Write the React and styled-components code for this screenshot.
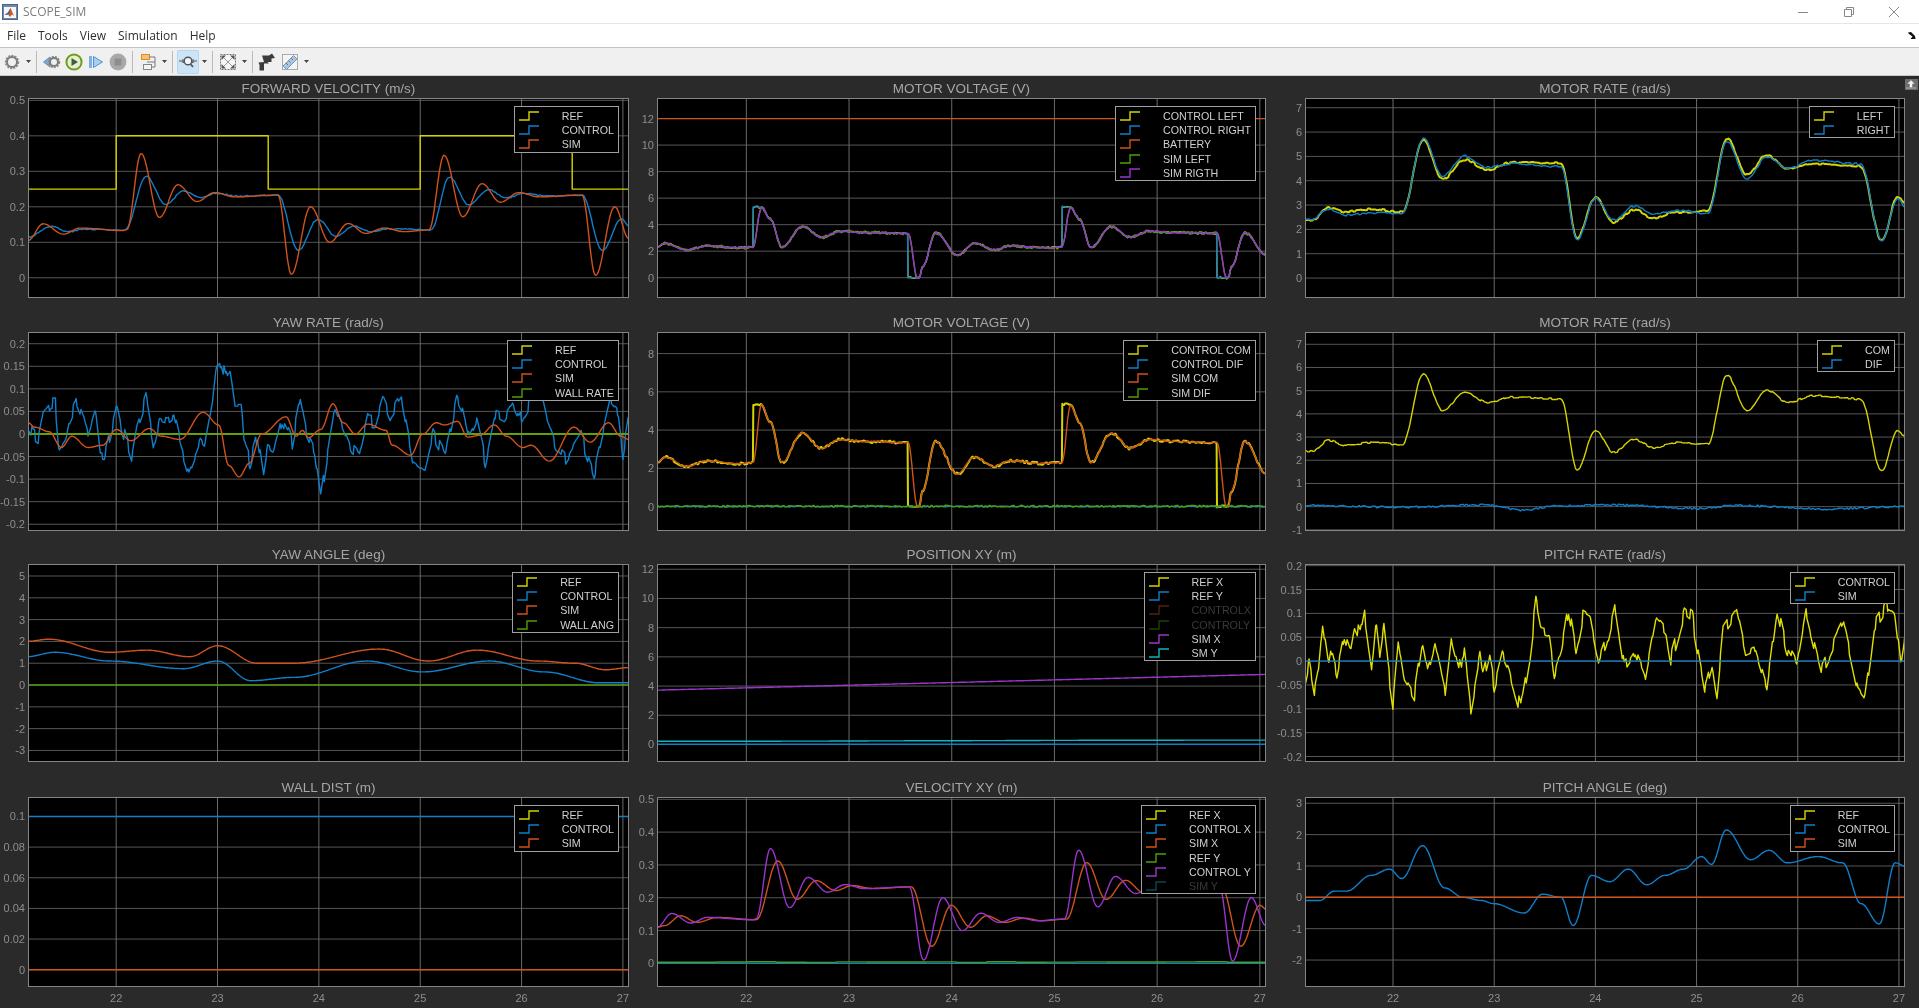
import React from "react";
import styled, { createGlobalStyle } from "styled-components";

const GlobalStyle = createGlobalStyle`
  html, body {
    margin: 0;
    padding: 0;
    height: 100%;
    overflow: hidden;
    background: #2a2a2a;
  }
  * {
    box-sizing: border-box;
  }
`;

const YELLOW = "#d4d400";
const BLUE = "#0f7fcb";
const ORANGE = "#d0521c";
const GREEN = "#4f9e08";
const PURPLE = "#9a34cc";
const TEAL = "#12b4bc";
const DIM = "#3a3a3a";

const T_SPAN = [21.13, 27.06];
const Z1 = [68, 1540];
const Z2 = [42, 1534];
const Z3 = [62, 1530];
const S1 = [23, 514];
const S3 = [1066, 1556];

const shift = (keys, dx) => keys.map(([x, v]) => [x + dx, v]);

function rng(seed) {
  let a = seed;
  return () => {
    a = (a + 0x6d2b79f5) | 0;
    let t = Math.imul(a ^ (a >>> 15), 1 | a);
    t = (t + Math.imul(t ^ (t >>> 7), 61 | t)) ^ t;
    return ((t ^ (t >>> 14)) >>> 0) / 4294967296 - 0.5;
  };
}

// key points to sampled points, cosine between neighbours unless linear
function sample(series, w) {
  const { keys, span = T_SPAN, linear, noise = 0, hold = 2, seed = 7 } = series;
  const rand = rng(seed);
  const pts = [];
  let px = 0;
  let n = 0;
  const toX = (k) => ((k - span[0]) / (span[1] - span[0])) * w;
  for (let i = 0; i < keys.length - 1; i++) {
    const x0 = toX(keys[i][0]);
    const x1 = toX(keys[i + 1][0]);
    const steps = Math.max(1, Math.ceil(x1 - x0));
    for (let s = 0; s < steps; s++) {
      const f = s / steps;
      const g = linear ? f : (1 - Math.cos(Math.PI * f)) / 2;
      if (noise && n++ % hold === 0) px = rand() * noise;
      const v = keys[i][1] + (keys[i + 1][1] - keys[i][1]) * g + px;
      pts.push([x0 + (x1 - x0) * f, v]);
    }
  }
  const last = keys[keys.length - 1];
  pts.push([toX(last[0]), last[1]]);
  return pts;
}

function linePath(series, w, h, yMin, yMax) {
  return sample(series, w)
    .map(([x, v], i) => {
      const y = h - ((v - yMin) / (yMax - yMin)) * h;
      return `${i ? "L" : "M"}${x.toFixed(1)} ${y.toFixed(1)}`;
    })
    .join("");
}

const flat = (v) => [
  [T_SPAN[0], v],
  [T_SPAN[1], v],
];

const velRef = [
  [21.13, 0.25], [22, 0.25], [22, 0.4], [23.5, 0.4], [23.5, 0.25], [25, 0.25],
  [25, 0.4], [26.5, 0.4], [26.5, 0.25], [27.06, 0.25],
];
const velSim = [
  [68, 0.105], [105, 0.152], [155, 0.123], [195, 0.14], [300, 0.133], [310, 0.136], [345, 0.35],
  [390, 0.17], [435, 0.262], [482, 0.215], [525, 0.24], [575, 0.228], [680, 0.233], [713, 0.01],
  [760, 0.2], [807, 0.1], [852, 0.153], [895, 0.125], [940, 0.14], [990, 0.13], [1050, 0.135],
  [1087, 0.345], [1133, 0.172], [1180, 0.265], [1225, 0.213], [1270, 0.24], [1320, 0.228],
  [1425, 0.233], [1458, 0.007], [1505, 0.2], [1540, 0.11],
];
const velCtrl = [
  [68, 0.115], [125, 0.145], [165, 0.13], [210, 0.137], [305, 0.134], [358, 0.285], [405, 0.207],
  [450, 0.245], [490, 0.225], [530, 0.238], [580, 0.23], [680, 0.233], [730, 0.078], [778, 0.165],
  [822, 0.118], [865, 0.145], [910, 0.13], [950, 0.138], [1055, 0.135], [1100, 0.283], [1148, 0.205],
  [1195, 0.248], [1240, 0.225], [1285, 0.238], [1340, 0.23], [1425, 0.233], [1475, 0.078],
  [1522, 0.165], [1540, 0.145],
];

const voltHead = [[42, 2.3], [60, 2.6], [115, 2.1], [165, 2.4], [240, 2.25], [277, 2.3]];
const voltMid = [[320, 4.4], [348, 2.3], [398, 3.85], [445, 3.05], [490, 3.5], [560, 3.4], [650, 3.35]];
const voltTail = [[725, 3.4], [778, 1.7], [820, 2.6], [868, 2.1], [905, 2.4], [990, 2.25], [1034, 2.3]];
const voltPeriod = (rise, fall) => [...rise, ...voltMid, ...fall, ...voltTail];
const voltStep = voltPeriod([[278, 5.35], [298, 5.3]], [[656, 3.35], [657, 0], [685, 0], [692, 0.8]]);
const voltRamp = voltPeriod([[298, 5.3]], [[657, 3.35], [680, 0], [685, 0], [692, 0.8]]);
const voltControl = [...voltHead, ...voltStep, ...shift(voltStep, 757).filter(([x]) => x < 1540)];
const voltSim = [...voltHead, ...voltRamp, ...shift(voltRamp, 757).filter(([x]) => x < 1540)];

const motorRate = [
  [21.13, 2.4], [21.2, 2.4], [21.36, 2.85], [21.54, 2.65], [21.78, 2.75], [22.09, 2.68], [22.3, 5.7],
  [22.49, 4.15], [22.71, 4.95], [22.93, 4.5], [23.17, 4.72], [23.66, 4.65], [23.82, 1.6], [24.0, 3.3],
  [24.18, 2.35], [24.39, 2.9], [24.57, 2.55], [24.8, 2.75], [25.11, 2.7], [25.3, 5.65], [25.5, 4.15],
  [25.69, 5], [25.91, 4.5], [26.14, 4.78], [26.62, 4.65], [26.83, 1.55], [26.99, 3.3], [27.06, 3],
];
// the two wheels drift apart a little on the plateaus
const motorLeft = motorRate.map(([t, v]) => [t, v - 0.09 * Math.sin(t * 3.4)]);
const motorRight = motorRate.map(([t, v]) => [t, v + 0.07 * Math.sin(t * 3.4)]);
const motorDif = [
  [62, 0.05], [300, -0.02], [500, 0.08], [595, -0.15], [680, 0.03], [800, 0.08], [1030, -0.08],
  [1110, 0.05], [1340, -0.1], [1530, 0],
];

const yawControl = [
  [68, 0.02], [80, 0], [95, -0.01], [105, 0.04], [125, 0.065], [135, 0.065], [145, -0.04], [160, -0.02],
  [170, 0.03], [188, 0.068], [205, 0.03], [215, 0], [232, 0.05], [245, -0.055], [255, -0.055], [270, 0],
  [287, 0.065], [300, 0.01], [322, -0.05], [335, 0.02], [357, 0.08], [375, -0.02], [390, 0.035],
  [410, 0.03], [425, 0.04], [440, -0.02], [462, -0.085], [490, -0.02], [500, -0.03], [520, 0.07],
  [530, 0.15], [542, 0.16], [552, 0.12], [563, 0.135], [575, 0.06], [590, 0.06], [597, -0.03],
  [612, -0.06], [630, 0], [645, -0.095], [655, -0.04], [670, -0.05], [690, 0.03], [715, -0.02],
  [735, 0.07], [750, 0], [770, -0.04], [785, -0.145], [800, -0.05], [820, 0.06], [838, 0.02],
  [860, -0.03], [880, -0.05], [900, 0.03], [920, 0.03], [937, 0.08], [955, 0.04], [985, 0.08],
  [1010, -0.05], [1040, -0.07], [1060, 0], [1090, -0.05], [1118, 0.07], [1130, 0.05], [1145, -0.01],
  [1165, 0.03], [1188, -0.06], [1210, 0.04], [1235, 0.03], [1255, 0.06], [1270, 0.03], [1295, 0.07],
  [1320, 0.1], [1340, 0.02], [1360, -0.03], [1385, -0.055], [1420, 0], [1455, -0.085], [1495, 0.08],
  [1510, 0.065], [1525, -0.05], [1540, 0.035],
];
const yawSim = [
  [68, 0.025], [85, 0.015], [120, 0.005], [150, -0.03], [175, -0.005], [215, -0.03], [250, -0.025],
  [285, 0.01], [320, -0.015], [365, 0.012], [395, -0.005], [440, -0.012], [497, 0.048], [535, 0.02],
  [560, -0.07], [585, -0.095], [610, -0.065], [640, 0], [700, 0.038], [725, -0.005], [740, 0.008],
  [755, -0.008], [785, 0.01], [815, 0.067], [840, 0.025], [870, 0], [900, 0.022], [945, 0.008],
  [960, -0.025], [1005, -0.047], [1035, 0], [1068, 0.025], [1088, 0.02], [1120, 0.028], [1145, -0.007],
  [1175, -0.003], [1210, 0.02], [1240, -0.005], [1280, -0.03], [1300, -0.025], [1345, -0.06],
  [1405, 0.015], [1445, -0.018], [1490, 0.025], [1520, -0.005], [1540, -0.012],
];

const angleSim = [
  [22, 2], [40, 2.1], [90, 1.5], [120, 1.6], [155, 1.3], [178, 1.8], [210, 1], [240, 1], [310, 1.65],
  [350, 1.1], [390, 1.6], [440, 1.1], [470, 1], [495, 0.7], [514, 0.8],
];
const angleCtrl = [
  [22, 1.3], [45, 1.5], [90, 1.1], [150, 0.75], [178, 1.1], [205, 0.2], [240, 0.35], [300, 1.1],
  [345, 0.6], [400, 1.1], [445, 0.6], [490, 0.1], [514, 0.1],
];

const pitchRate = [
  [62, -0.04], [72, 0], [85, -0.065], [95, -0.02], [105, 0.075], [118, -0.005], [125, 0.03], [140, -0.02],
  [158, 0.06], [172, 0.025], [183, 0.08], [197, 0.05], [208, 0.1], [225, -0.005], [235, 0.09], [245, 0.01],
  [255, 0.07], [265, -0.01], [277, -0.085], [290, 0.045], [303, -0.03], [330, -0.07], [348, 0.035],
  [362, -0.03], [380, 0.03], [405, -0.065], [420, 0.055], [445, -0.03], [452, 0.025], [468, -0.095],
  [490, 0.01], [497, -0.04], [512, 0.01], [525, -0.05], [545, 0.02], [560, -0.01], [590, -0.105], [610, 0],
  [627, 0.12], [640, 0.06], [660, 0.055], [672, -0.02], [690, 0.03], [707, 0.115], [725, 0.02], [742, 0.09],
  [760, 0.08], [780, -0.01], [800, 0.04], [820, 0.115], [843, -0.015], [870, 0.02], [895, -0.035],
  [920, 0.085], [945, 0.06], [957, 0], [990, 0.105], [1010, 0.09], [1040, -0.06], [1058, 0], [1070, -0.07],
  [1085, 0.065], [1118, 0.11], [1140, 0.02], [1165, 0.03], [1192, -0.05], [1217, 0.115], [1240, 0.03],
  [1265, -0.01], [1288, 0.105], [1325, -0.025], [1380, 0.08], [1415, -0.06], [1432, -0.08], [1455, 0.07],
  [1490, 0.12], [1505, 0.11], [1520, 0], [1530, 0.06],
];
const pitchAngle = [
  [1066, -0.1], [1078, -0.1], [1090, 0.2], [1100, 0.2], [1120, 0.7], [1135, 0.9], [1145, 0.6], [1162, 1.65],
  [1180, 0.3], [1195, 0], [1210, -0.1], [1220, -0.2], [1245, -0.5], [1260, 0.1], [1275, 0], [1285, -0.9],
  [1300, 0.7], [1315, 0.5], [1330, 0.9], [1345, 0.4], [1360, 0.7], [1375, 0.9], [1390, 1.3], [1398, 1.05],
  [1410, 2.15], [1430, 1.2], [1445, 1.5], [1460, 1.1], [1485, 1.3], [1505, 1.1], [1520, -0.2], [1535, -0.85],
  [1548, 1.1], [1556, 1],
];

const velXYPurple = [
  [42, 0.11], [78, 0.152], [125, 0.123], [165, 0.14], [275, 0.133], [285, 0.136], [320, 0.35], [367, 0.17],
  [412, 0.262], [460, 0.217], [503, 0.24], [550, 0.228], [660, 0.233], [695, 0.01], [742, 0.2], [790, 0.1],
  [835, 0.153], [880, 0.125], [925, 0.14], [975, 0.13], [1040, 0.135], [1075, 0.345], [1122, 0.172],
  [1165, 0.265], [1215, 0.213], [1260, 0.24], [1310, 0.228], [1420, 0.233], [1452, 0.007], [1498, 0.2],
  [1534, 0.115],
];
const velXYOrange = [
  [42, 0.11], [60, 0.115], [100, 0.145], [140, 0.125], [190, 0.14], [285, 0.133], [338, 0.312], [385, 0.195],
  [432, 0.252], [480, 0.222], [520, 0.237], [570, 0.228], [665, 0.233], [715, 0.052], [763, 0.177], [810, 0.11],
  [850, 0.145], [895, 0.125], [940, 0.138], [985, 0.13], [1045, 0.135], [1095, 0.307], [1142, 0.195],
  [1190, 0.253], [1235, 0.215], [1285, 0.24], [1330, 0.23], [1425, 0.233], [1472, 0.052], [1520, 0.177],
  [1534, 0.165],
];

const panels = [
  {
    title: "FORWARD VELOCITY (m/s)", yMin: -0.057, yMax: 0.5066, ticks: [0, 0.1, 0.2, 0.3, 0.4, 0.5],
    series: [
      { color: YELLOW, keys: velRef, linear: true },
      { color: BLUE, keys: velCtrl, span: Z1, noise: 0.003, seed: 3 },
      { color: ORANGE, keys: velSim, span: Z1 },
    ],
    legend: [["REF", YELLOW], ["CONTROL", BLUE], ["SIM", ORANGE]],
  },
  {
    title: "MOTOR VOLTAGE (V)", yMin: -1.53, yMax: 13.55, ticks: [0, 2, 4, 6, 8, 10, 12],
    series: [
      { color: YELLOW, keys: voltControl, span: Z2, noise: 0.12, seed: 4 },
      { color: BLUE, keys: voltControl, span: Z2 },
      { color: ORANGE, keys: flat(12) },
      { color: GREEN, keys: voltSim, span: Z2, noise: 0.22, seed: 11 },
      { color: PURPLE, keys: voltSim, span: Z2, noise: 0.1, seed: 15 },
    ],
    legend: [["CONTROL LEFT", YELLOW], ["CONTROL RIGHT", BLUE], ["BATTERY", ORANGE], ["SIM LEFT", GREEN], ["SIM RIGTH", PURPLE]],
  },
  {
    title: "MOTOR RATE (rad/s)", yMin: -0.82, yMax: 7.4, ticks: [0, 1, 2, 3, 4, 5, 6, 7],
    series: [
      { color: YELLOW, keys: motorLeft, noise: 0.08, hold: 3, seed: 5, wide: true },
      { color: BLUE, keys: motorRight, noise: 0.08, hold: 3, seed: 21 },
    ],
    legend: [["LEFT", YELLOW], ["RIGHT", BLUE]],
  },
  {
    title: "YAW RATE (rad/s)", yMin: -0.215, yMax: 0.226, ticks: [-0.2, -0.15, -0.1, -0.05, 0, 0.05, 0.1, 0.15, 0.2],
    series: [
      { color: YELLOW, keys: flat(0) },
      { color: BLUE, keys: yawControl, span: Z1, linear: true, noise: 0.035, hold: 4, seed: 9 },
      { color: GREEN, keys: flat(0) },
      { color: ORANGE, keys: yawSim, span: Z1 },
    ],
    legend: [["REF", YELLOW], ["CONTROL", BLUE], ["SIM", ORANGE], ["WALL RATE", GREEN]],
  },
  {
    title: "MOTOR VOLTAGE (V)", yMin: -1.28, yMax: 9.13, ticks: [0, 2, 4, 6, 8],
    series: [
      { color: YELLOW, keys: voltControl, span: Z2, noise: 0.14, seed: 22, wide: true },
      { color: BLUE, keys: flat(0), noise: 0.06, seed: 2 },
      { color: ORANGE, keys: voltSim, span: Z2, noise: 0.05, seed: 13 },
      { color: GREEN, keys: flat(0.02), noise: 0.09, seed: 17 },
    ],
    legend: [["CONTROL COM", YELLOW], ["CONTROL DIF", BLUE], ["SIM COM", ORANGE], ["SIM DIF", GREEN]],
  },
  {
    title: "MOTOR RATE (rad/s)", yMin: -1.05, yMax: 7.53, ticks: [-1, 0, 1, 2, 3, 4, 5, 6, 7],
    series: [
      { color: YELLOW, keys: motorRate, noise: 0.08, hold: 3, seed: 6 },
      { color: BLUE, keys: motorDif, span: Z3, noise: 0.07, seed: 19 },
    ],
    legend: [["COM", YELLOW], ["DIF", BLUE]],
  },
  {
    title: "YAW ANGLE (deg)", yMin: -3.53, yMax: 5.55, ticks: [-3, -2, -1, 0, 1, 2, 3, 4, 5],
    series: [
      { color: GREEN, keys: flat(0) },
      { color: BLUE, keys: angleCtrl, span: S1 },
      { color: ORANGE, keys: angleSim, span: S1 },
    ],
    legend: [["REF", YELLOW], ["CONTROL", BLUE], ["SIM", ORANGE], ["WALL ANG", GREEN]],
  },
  {
    title: "POSITION XY (m)", yMin: -1.2, yMax: 12.36, ticks: [0, 2, 4, 6, 8, 10, 12],
    series: [
      { color: BLUE, keys: flat(0.02) },
      { color: TEAL, keys: [[T_SPAN[0], 0.22], [T_SPAN[1], 0.3]] },
      { color: PURPLE, keys: [[T_SPAN[0], 3.72], [T_SPAN[1], 4.8]], linear: true },
    ],
    legend: [["REF X", YELLOW], ["REF Y", BLUE], ["CONTROLX", ORANGE, true], ["CONTROLY", GREEN, true], ["SIM X", PURPLE], ["SM Y", TEAL]],
  },
  {
    title: "PITCH RATE (rad/s)", yMin: -0.2115, yMax: 0.2035, ticks: [-0.2, -0.15, -0.1, -0.05, 0, 0.05, 0.1, 0.15, 0.2],
    series: [
      { color: "#e0e000", keys: pitchRate, span: Z3, linear: true, noise: 0.035, hold: 4, seed: 8 },
      { color: BLUE, keys: flat(0) },
    ],
    legend: [["CONTROL", YELLOW], ["SIM", BLUE]],
  },
  {
    title: "WALL DIST (m)", yMin: -0.0113, yMax: 0.1127, ticks: [0, 0.02, 0.04, 0.06, 0.08, 0.1],
    series: [
      { color: BLUE, keys: flat(0.1) },
      { color: ORANGE, keys: flat(0) },
    ],
    legend: [["REF", YELLOW], ["CONTROL", BLUE], ["SIM", ORANGE]],
  },
  {
    title: "VELOCITY XY (m)", yMin: -0.072, yMax: 0.507, ticks: [0, 0.1, 0.2, 0.3, 0.4, 0.5],
    series: [
      { color: BLUE, keys: flat(0) },
      { color: GREEN, keys: flat(0.004), noise: 0.002, hold: 30, seed: 12 },
      { color: ORANGE, keys: velXYOrange, span: Z2 },
      { color: PURPLE, keys: velXYPurple, span: Z2 },
    ],
    legend: [["REF X", YELLOW], ["CONTROL X", BLUE], ["SIM X", ORANGE], ["REF Y", GREEN], ["CONTROL Y", PURPLE], ["SIM Y", TEAL, true]],
  },
  {
    title: "PITCH ANGLE (deg)", yMin: -2.86, yMax: 3.2, ticks: [-2, -1, 0, 1, 2, 3],
    series: [
      { color: BLUE, keys: pitchAngle, span: S3 },
      { color: ORANGE, keys: flat(0) },
    ],
    legend: [["REF", YELLOW], ["CONTROL", BLUE], ["SIM", ORANGE]],
  },
];

const columns = [
  { gutter: 28, width: 601 },
  { gutter: 17, width: 609 },
  { gutter: 25, width: 600 },
];
const plotHeights = [200, 199, 198, 190];

function MatlabIcon() {
  return (
    <svg width="16" height="16" viewBox="0 0 16 16">
      <rect x="0.5" y="0.5" width="15" height="15" fill="#6b88ad" stroke="#4c6587" />
      <rect x="2" y="3" width="12" height="11" fill="#f4f6f8" />
      <path d="M2.5 11 L6 8.5 L8.5 4 L12 12 L10 10.5 L8 13 L6 10.5Z" fill="#d9541e" />
      <path d="M2.5 11 L6 8.5 L8.5 4 L7.5 9.5 L6 10.5Z" fill="#2c6fb0" />
    </svg>
  );
}

function UndockArrow() {
  return (
    <svg width="9" height="9" viewBox="0 0 9 9">
      <path d="M1 1.5 L4 1 L8 5 L8.5 8 L3.5 8 L5.5 5.5 L2 3Z" fill="#111" />
    </svg>
  );
}

const Caret = () => (
  <CaretBox>
    <svg width="5" height="3" viewBox="0 0 5 3">
      <path d="M0 0 H5 L2.5 3Z" fill="#444" />
    </svg>
  </CaretBox>
);

const GearGlyph = ({ cx = 12, cy = 11, r = 5 }) => (
  <g>
    <circle cx={cx} cy={cy} r={r + 1.2} fill="none" stroke="#8a8a8a" strokeWidth="2" strokeDasharray="2 1.1" />
    <circle cx={cx} cy={cy} r={r} fill="none" stroke="#7c7c7c" strokeWidth="2" />
    <circle cx={cx} cy={cy} r={r - 2.4} fill="#efefef" />
  </g>
);

function ToolIcon({ name }) {
  return (
    <svg width="22" height="22" viewBox="0 0 22 22">
      {name === "gear" && <GearGlyph cx={11} cy={11} />}
      {name === "back" && (
        <g>
          <path d="M9 6 L2.5 11 L9 16Z" fill="#7fa9d4" stroke="#5f8dbd" />
          <GearGlyph cx={13} cy={11} r={4} />
        </g>
      )}
      {name === "play" && (
        <g>
          <circle cx="11" cy="11" r="7.6" fill="#e6efd0" stroke="#6e9c1e" strokeWidth="2" />
          <path d="M8.5 7 L15 11 L8.5 15Z" fill="#40603a" />
        </g>
      )}
      {name === "step" && (
        <g>
          <rect x="4" y="5" width="3" height="12" fill="#7fb0e0" />
          <path d="M8.5 5.5 L17.5 11 L8.5 16.5Z" fill="#a9cdf0" stroke="#4f92d4" />
        </g>
      )}
      {name === "stop" && (
        <g>
          <circle cx="11" cy="11" r="8.4" fill="#a8a8a8" />
          <rect x="7.5" y="7.5" width="7" height="7" rx="1" fill="#8e8e8e" />
        </g>
      )}
      {name === "blocks" && (
        <g>
          <rect x="4.5" y="3.5" width="8" height="5" fill="#f3c27a" stroke="#d98d22" />
          <rect x="6.5" y="13.5" width="8" height="5" fill="#f4f4f4" stroke="#888" />
          <path d="M12.5 6 H18 V11 H10 M18 11 V16 H14.5" fill="none" stroke="#7a7a7a" />
        </g>
      )}
      {name === "highlight" && (
        <g>
          <circle cx="11" cy="10" r="3.8" fill="#eef5fc" stroke="#555" strokeWidth="1.4" />
          <path d="M13.5 13 L16 16" stroke="#555" strokeWidth="1.8" />
          <path d="M2 10 H6 M6 8 V12 L7.5 10 M20 10 H16 M16 8 V12 L14.5 10" stroke="#555" fill="none" />
        </g>
      )}
      {name === "fit" && (
        <g>
          <rect x="3.5" y="3.5" width="15" height="15" fill="#f6f6f6" stroke="#777" strokeDasharray="2 1" />
          <path d="M4.5 4.5 H9 L4.5 9Z M17.5 4.5 V9 L13 4.5Z M4.5 17.5 V13 L9 17.5Z M17.5 17.5 H13 L17.5 13Z" fill="#555" />
          <path d="M7 7 L15 15 M15 7 L7 15" stroke="#999" />
        </g>
      )}
      {name === "cursor" && (
        <path d="M6 3.5 H13 L16 1.5 L19 6 L15.5 6.5 V10 H11.5 L13 11.5 H8 V18.5 H3.5 V13 L2.5 10.5 L8 10 Z" transform="translate(-1 1)" fill="#3c3c3c" />
      )}
      {name === "ruler" && (
        <g>
          <rect x="3.5" y="3.5" width="15" height="15" fill="#f4f4f4" stroke="#aaa" />
          <path d="M4 15 L14.5 4.5 L18 8 L7.5 18.5Z" fill="#a9c6e2" stroke="#7e98b2" />
          <path d="M7 12 L9 14 M9.5 9.5 L11.5 11.5 M12 7 L14 9" stroke="#5f7890" />
        </g>
      )}
    </svg>
  );
}

function WindowControls() {
  return (
    <Controls>
      <ControlBox>
        <svg width="12" height="12" viewBox="0 0 12 12">
          <path d="M1 6.5 H11" stroke="#888" />
        </svg>
      </ControlBox>
      <ControlBox>
        <svg width="12" height="12" viewBox="0 0 12 12">
          <path d="M1.5 3.5 H8.5 V10.5 H1.5Z M3.5 3.5 V1.5 H10.5 V8.5 H8.5" stroke="#888" fill="none" />
        </svg>
      </ControlBox>
      <ControlBox>
        <svg width="12" height="12" viewBox="0 0 12 12">
          <path d="M1 1 L11 11 M11 1 L1 11" stroke="#888" />
        </svg>
      </ControlBox>
    </Controls>
  );
}

function LegendIcon({ color }) {
  return (
    <LegendSwatch width="20" height="12" viewBox="0 0 20 12">
      <path d="M0 10 H10 V2 H20" fill="none" stroke={color} strokeWidth="1.4" />
    </LegendSwatch>
  );
}

function Legend({ items }) {
  return (
    <LegendBox>
      {items.map(([label, color, off]) => (
        <LegendRow key={label}>
          <LegendIcon color={off ? `${color}66` : color} />
          <LegendLabel $off={off}>{label}</LegendLabel>
        </LegendRow>
      ))}
    </LegendBox>
  );
}

function Chart({ panel, width, height, showX }) {
  const { yMin, yMax, ticks, series } = panel;
  const yOf = (v) => height - ((v - yMin) / (yMax - yMin)) * height;
  const xTicks = [22, 23, 24, 25, 26, 27].map((t) => [t, ((t - T_SPAN[0]) / (T_SPAN[1] - T_SPAN[0])) * width]);
  return (
    <ChartSvg width={width} height={height}>
      <rect width={width} height={height} fill="#000" />
      {ticks.map((v) => (
        <line key={v} x1="0" x2={width} y1={yOf(v)} y2={yOf(v)} stroke="#565656" />
      ))}
      {xTicks.map(([t, x]) => (
        <line key={t} x1={x} x2={x} y1="0" y2={height} stroke="#6a6a6a" />
      ))}
      <svg width={width} height={height}>
        {series.map((s, i) => (
          <path
            key={i}
            d={linePath(s, width, height, yMin, yMax)}
            fill="none"
            stroke={s.color}
            strokeWidth={s.wide ? 2 : 1.4}
            strokeLinejoin="round"
          />
        ))}
      </svg>
      <rect x="0.5" y="0.5" width={width - 1} height={height - 1} fill="none" stroke="#858585" />
      {ticks.map((v) => (
        <TickText key={v} x="-3" y={yOf(v) + 4} textAnchor="end">
          {String(v)}
        </TickText>
      ))}
      {showX &&
        xTicks.map(([t, x]) => (
          <TickText key={t} x={x} y={height + 15} textAnchor="middle">
            {t}
          </TickText>
        ))}
    </ChartSvg>
  );
}

export default function App() {
  return (
    <Window>
      <GlobalStyle />
      <TitleBar>
        <MatlabIcon />
        <WindowTitle>SCOPE_SIM</WindowTitle>
        <WindowControls />
      </TitleBar>
      <MenuBar>
        <MenuItem>File</MenuItem>
        <MenuItem>Tools</MenuItem>
        <MenuItem>View</MenuItem>
        <MenuItem>Simulation</MenuItem>
        <MenuItem>Help</MenuItem>
        <MenuEnd>
          <UndockArrow />
        </MenuEnd>
      </MenuBar>
      <Toolbar>
        <ToolButton><ToolIcon name="gear" /></ToolButton>
        <Caret />
        <Separator />
        <ToolButton><ToolIcon name="back" /></ToolButton>
        <ToolButton><ToolIcon name="play" /></ToolButton>
        <ToolButton><ToolIcon name="step" /></ToolButton>
        <ToolButton><ToolIcon name="stop" /></ToolButton>
        <Separator />
        <ToolButton><ToolIcon name="blocks" /></ToolButton>
        <Caret />
        <Separator />
        <ToolButton $active><ToolIcon name="highlight" /></ToolButton>
        <Caret />
        <Separator />
        <ToolButton><ToolIcon name="fit" /></ToolButton>
        <Caret />
        <Separator />
        <ToolButton><ToolIcon name="cursor" /></ToolButton>
        <ToolButton><ToolIcon name="ruler" /></ToolButton>
        <Caret />
      </Toolbar>
      <PlotGrid>
        <DockButton>
          <svg width="12" height="10" viewBox="0 0 12 10">
            <path d="M6 1.5 L9 4.5 H7 V8 H5 V4.5 H3Z M1 9 H11" fill="#f2f2f2" stroke="#f2f2f2" strokeWidth="0.5" />
          </svg>
        </DockButton>
        {panels.map((panel, i) => {
          const col = columns[i % 3];
          const row = Math.floor(i / 3);
          return (
            <Panel key={i} $gutter={col.gutter} $width={col.width}>
              <PlotTitle>{panel.title}</PlotTitle>
              <AxesWrap>
                <Chart panel={panel} width={col.width} height={plotHeights[row]} showX={row === 3} />
                <Legend items={panel.legend} />
              </AxesWrap>
            </Panel>
          );
        })}
      </PlotGrid>
    </Window>
  );
}

const Window = styled.div`
  width: 1919px;
  height: 1008px;
  display: flex;
  flex-direction: column;
  background: #2a2a2a;
  overflow: hidden;
  filter: blur(0.45px);
`;

const TitleBar = styled.div`
  height: 24px;
  flex: none;
  display: flex;
  align-items: center;
  padding-left: 2px;
  background: #fff;
  border-bottom: 1px solid #e6e6e6;
`;

const WindowTitle = styled.span`
  margin-left: 5px;
  font: 12px "Open Sans", "Liberation Sans", sans-serif;
  color: #7c7c7c;
`;

const Controls = styled.div`
  margin-left: auto;
  display: flex;
  padding-right: 2px;
`;

const ControlBox = styled.div`
  width: 45.5px;
  height: 23px;
  display: flex;
  align-items: center;
  justify-content: center;
`;

const MenuBar = styled.div`
  height: 24px;
  flex: none;
  display: flex;
  align-items: center;
  padding: 0 3px 0 7px;
  gap: 12px;
  background: #fff;
  border-bottom: 1px solid #c4c4c4;
`;

const MenuItem = styled.span`
  font: 12px "Open Sans", "Liberation Sans", sans-serif;
  color: #2e2e2e;
`;

const MenuEnd = styled.div`
  margin-left: auto;
  display: flex;
`;

const Toolbar = styled.div`
  height: 28px;
  flex: none;
  display: flex;
  align-items: center;
  padding-left: 1px;
  background: #f0f0f0;
  border-bottom: 1px solid #c8c8c8;
`;

const ToolButton = styled.div`
  width: 22px;
  height: 24px;
  display: flex;
  align-items: center;
  justify-content: center;
  border-radius: 2px;
  background: ${(p) => (p.$active ? "#cce4f7" : "transparent")};
  box-shadow: ${(p) => (p.$active ? "inset 0 0 0 1px #b5d7f3" : "none")};
`;

const CaretBox = styled.div`
  width: 10px;
  display: flex;
  justify-content: center;
`;

const Separator = styled.div`
  width: 1px;
  height: 22px;
  margin: 0 4px 0 3px;
  background: #b9b9b9;
`;

const PlotGrid = styled.div`
  position: relative;
  flex: 1;
  display: grid;
  grid-template-columns: 640px 640px 639px;
  grid-template-rows: 234px 232px 233px 231px;
  padding-top: 2px;
`;

const DockButton = styled.div`
  position: absolute;
  top: 3px;
  right: 1px;
  width: 13px;
  height: 11px;
  display: flex;
  background: #6d6d6d;
`;

const Panel = styled.div`
  padding-left: ${(p) => p.$gutter}px;
  width: ${(p) => p.$gutter + p.$width}px;
  display: flex;
  flex-direction: column;
  align-items: stretch;
`;

const PlotTitle = styled.div`
  height: 20px;
  text-align: center;
  font: 13.5px/22px "Liberation Sans", Arial, sans-serif;
  color: #a6a6a6;
`;

const AxesWrap = styled.div`
  position: relative;
`;

const ChartSvg = styled.svg`
  display: block;
  overflow: visible;
`;

const TickText = styled.text`
  font: 11px "Liberation Sans", Arial, sans-serif;
  fill: #8e8e8e;
`;

const LegendBox = styled.div`
  position: absolute;
  top: 8px;
  right: 10px;
  padding: 2px 4px 0 4px;
  background: #000;
  border: 1px solid #a0a0a0;
`;

const LegendRow = styled.div`
  height: 14.2px;
  display: flex;
  align-items: center;
`;

const LegendSwatch = styled.svg`
  flex: none;
  margin-right: 23px;
`;

const LegendLabel = styled.span`
  font: 10.7px "Liberation Sans", Arial, sans-serif;
  white-space: nowrap;
  color: ${(p) => (p.$off ? DIM : "#cfcfcf")};
`;
